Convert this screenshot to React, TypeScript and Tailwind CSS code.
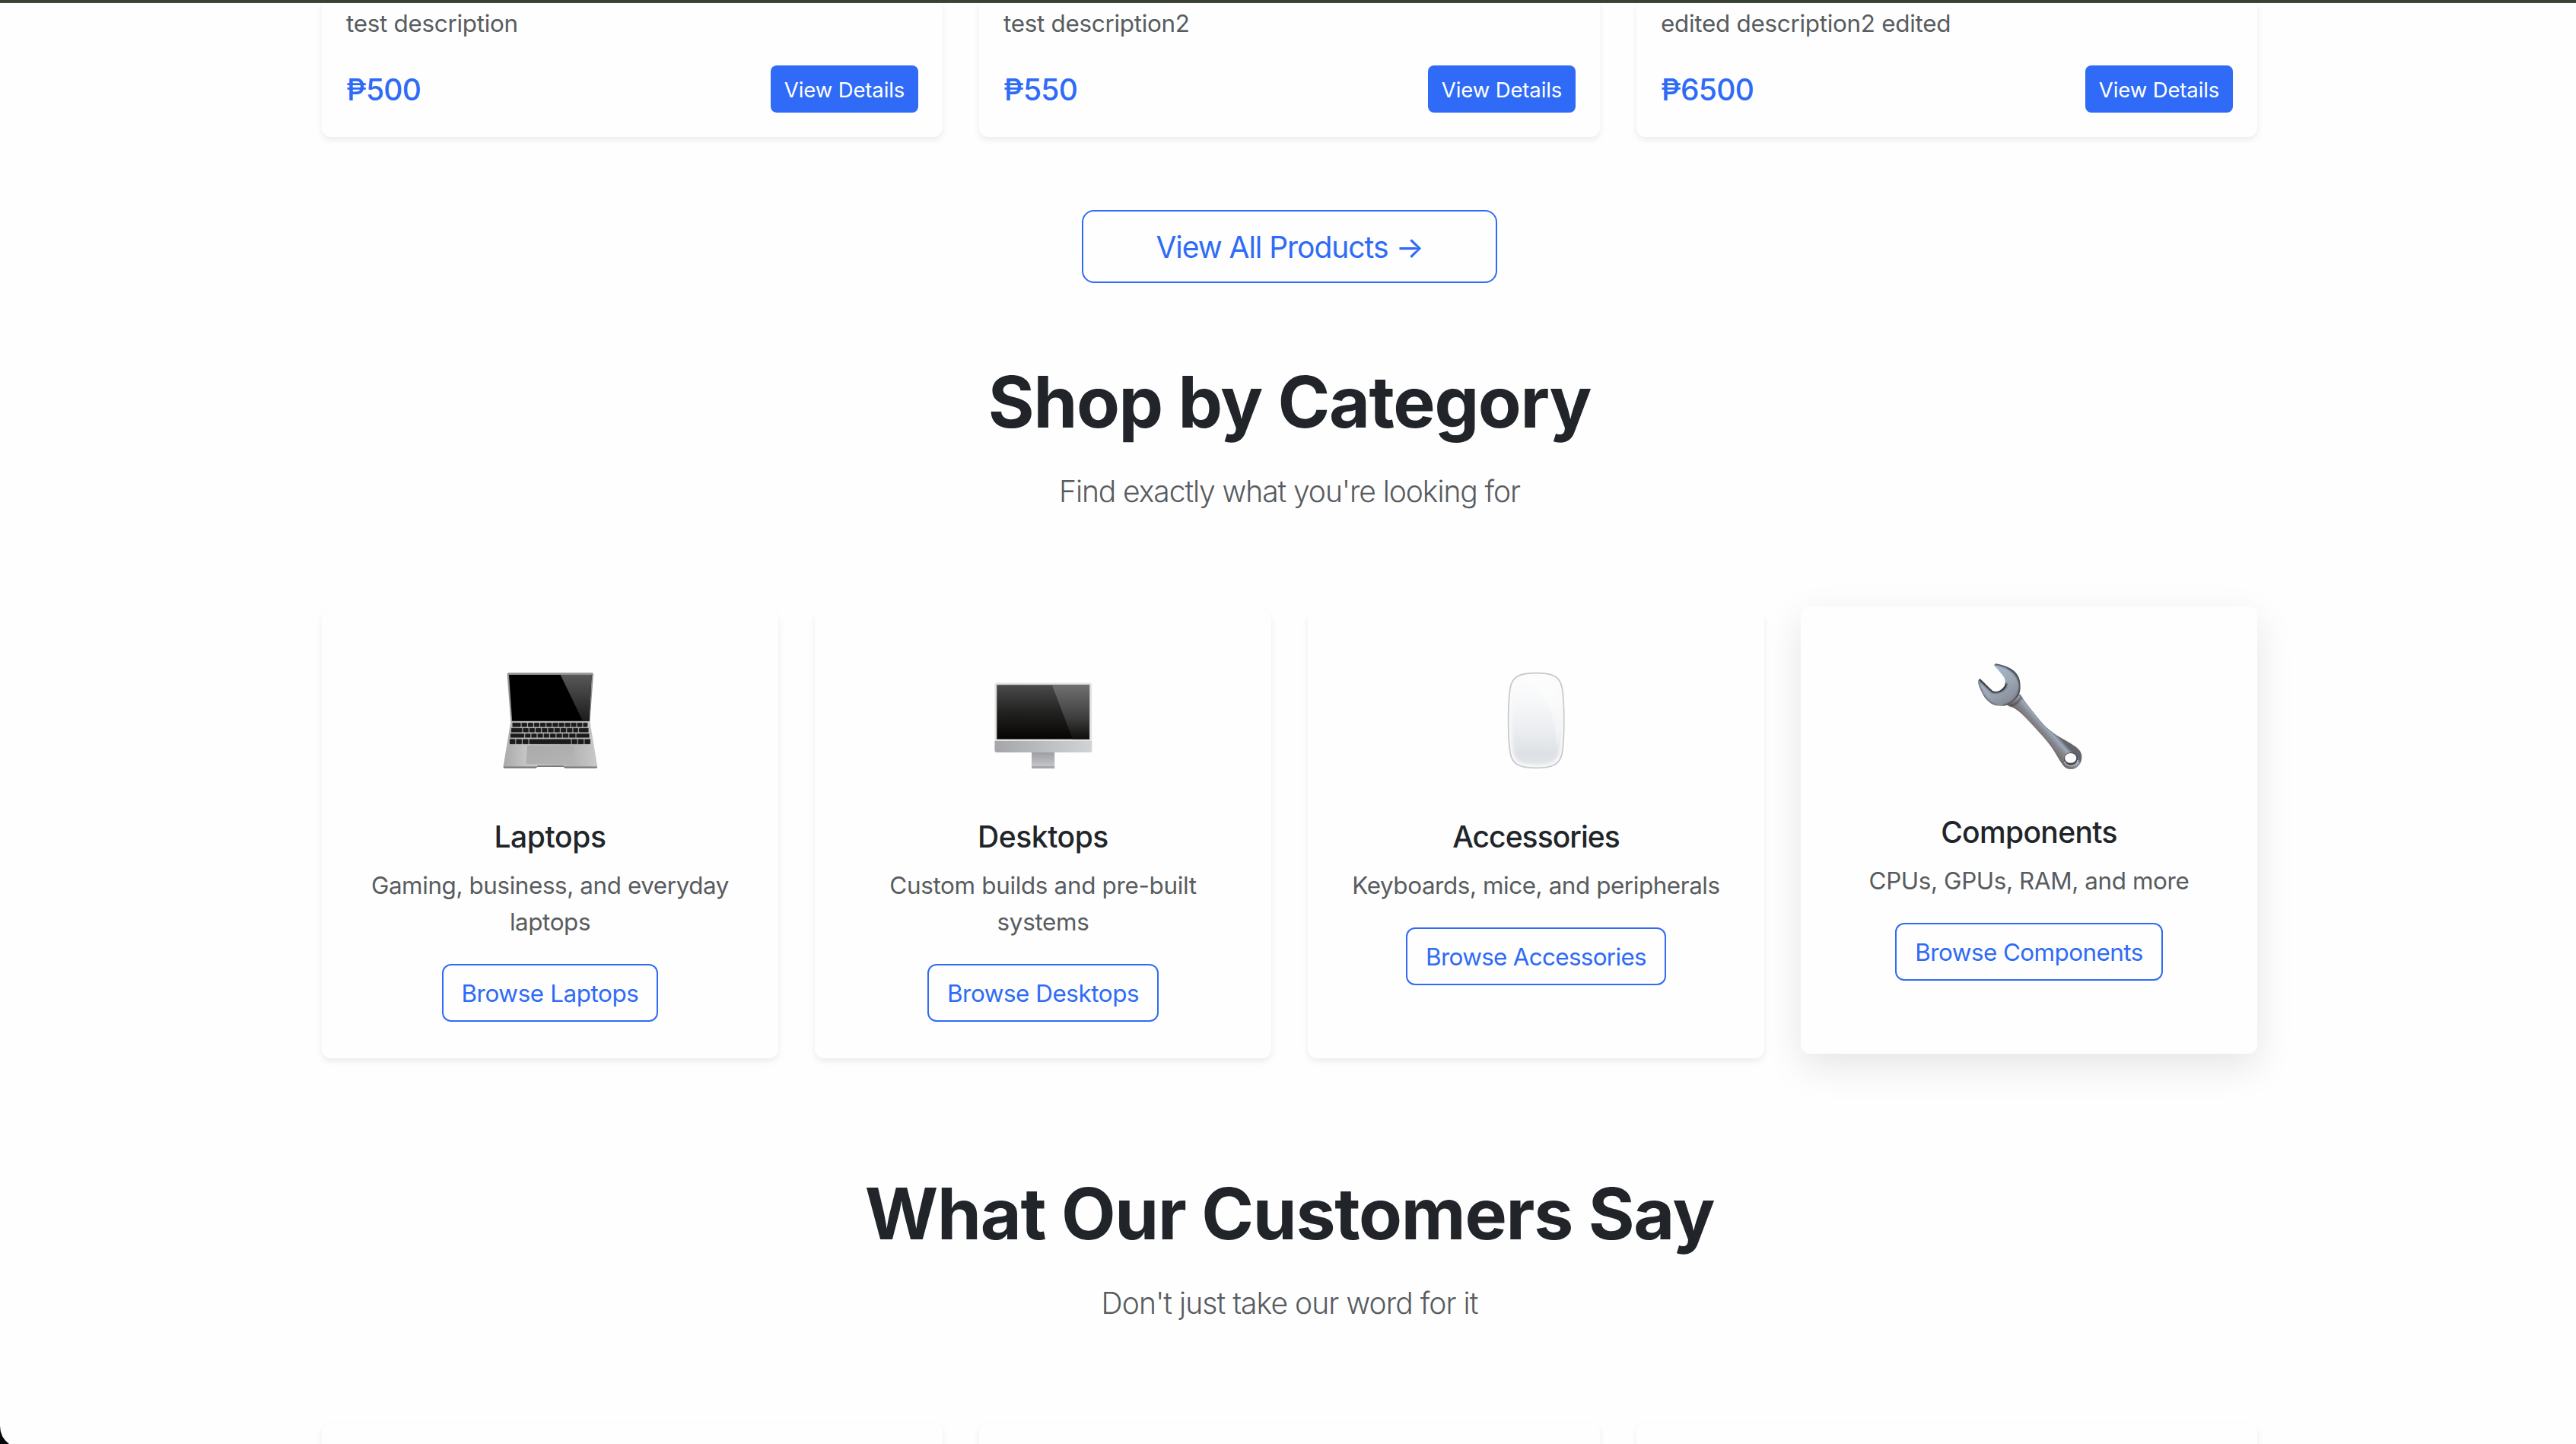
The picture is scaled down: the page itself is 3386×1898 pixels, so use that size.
import type { ReactNode } from "react";

const products = [
  { description: "test description", price: "₱500" },
  { description: "test description2", price: "₱550" },
  { description: "edited description2 edited", price: "₱6500" },
];

function LaptopIcon() {
  const rows = [
    { y: 73, h: 5.4, keys: [20.6, 32.6, 41, 49, 57, 65.2, 73.4, 81.6, 89.6, 97.6, 105.6, 113.4], end: 120.4 },
    { y: 80, h: 5.4, keys: [19, 34.4, 42.8, 51, 59.2, 67.4, 75.8, 84, 92.2, 100.4, 108], end: 121.6 },
    { y: 87.2, h: 5.4, keys: [18, 37.2, 45.4, 53.6, 61.8, 70, 78.4, 86.8, 95.2, 104.6], end: 122.6 },
    { y: 94.4, h: 6.6, keys: [17, 25.4, 34, 42.6, 98.6, 106.8, 115.4], end: 124 },
  ];
  return (
    <svg viewBox="0 0 140 140" className="size-[140px]">
      <defs>
        <linearGradient id="lapBase" x1="0" y1="0" x2="1" y2="0">
          <stop offset="0" stopColor="#a9a9a9" />
          <stop offset="0.25" stopColor="#c6c6c6" />
          <stop offset="0.75" stopColor="#b5b5b5" />
          <stop offset="1" stopColor="#c9c9c9" />
        </linearGradient>
        <linearGradient id="lapGlare" x1="0" y1="0" x2="0" y2="1">
          <stop offset="0" stopColor="#585858" />
          <stop offset="1" stopColor="#1c1c1c" />
        </linearGradient>
        <linearGradient id="lapPad" x1="0" y1="0" x2="1" y2="1">
          <stop offset="0" stopColor="#aaaaaa" />
          <stop offset="1" stopColor="#b4b4b4" />
        </linearGradient>
      </defs>
      <path d="M15.5 7.2H125a2 2 0 0 1 2 2L122.4 72H18.4L13.6 9.2a2 2 0 0 1 1.9-2Z" fill="#8f9491" />
      <path d="M16 10H124.7L121.4 70.8H20.2Z" fill="#000" />
      <path d="M83.7 10H124.7L121.4 70.8H113Z" fill="url(#lapGlare)" />
      <path d="M18.4 71H122.4L132.2 130.5a1.6 1.6 0 0 1-1.6 2.2H90l-2-1.8H53l-2 1.8H10.2a1.6 1.6 0 0 1-1.6-2.2Z" fill="url(#lapBase)" />
      <path d="M8.6 130.6H52.6L54 129.2H86.6L88.2 130.6H132.2L131 132.8H89.6L87.6 131H53.4L51.4 132.8H9.8Z" fill="#7b7b7b" />
      {rows.map((row) =>
        row.keys.map((x, i) => (
          <rect key={`${row.y}-${x}`} x={x} y={row.y} width={(row.keys[i + 1] ?? row.end) - x - 1.1} height={row.h} rx={0.6} fill="#1b1b1b" stroke="#555" strokeWidth={0.4} />
        )),
      )}
      <path d="M40.1 102.8H100.7L101.5 127.2H38.5Z" fill="url(#lapPad)" />
    </svg>
  );
}

function DesktopIcon() {
  return (
    <svg viewBox="0 0 140 140" className="size-[140px]">
      <defs>
        <linearGradient id="deskScreen" x1="0" y1="0" x2="0" y2="1">
          <stop offset="0" stopColor="#4a4a4a" />
          <stop offset="0.5" stopColor="#222221" />
          <stop offset="1" stopColor="#060402" />
        </linearGradient>
        <linearGradient id="deskGlare" x1="0" y1="0" x2="0" y2="1">
          <stop offset="0" stopColor="#707070" />
          <stop offset="0.6" stopColor="#3e3e3e" />
          <stop offset="1" stopColor="#100f0d" />
        </linearGradient>
        <linearGradient id="deskChin" x1="0" y1="0" x2="1" y2="0">
          <stop offset="0" stopColor="#a5a6aa" />
          <stop offset="1" stopColor="#d2d3d5" />
        </linearGradient>
        <linearGradient id="deskStand" x1="0" y1="0" x2="0" y2="1">
          <stop offset="0" stopColor="#9b9ca0" />
          <stop offset="1" stopColor="#cacbcd" />
        </linearGradient>
      </defs>
      <rect x="55" y="111" width="30.2" height="21.6" fill="url(#deskStand)" />
      <rect x="55" y="130.2" width="30.2" height="1" fill="#a2a2a4" />
      <rect x="55" y="131.8" width="30.2" height="1" fill="#7e7e80" />
      <rect x="6.5" y="20.6" width="127.7" height="91.4" rx="2.5" fill="#e3e4e5" />
      <path d="M6.5 97H134.2V109.6a2.4 2.4 0 0 1-2.4 2.4H8.9a2.4 2.4 0 0 1-2.4-2.4Z" fill="url(#deskChin)" />
      <rect x="8.8" y="22.8" width="122.6" height="72.2" fill="#9a9a9a" />
      <rect x="9.5" y="23.4" width="121.2" height="71" fill="url(#deskScreen)" />
      <path d="M81.9 23.4H130.7V94.4H108.9Z" fill="url(#deskGlare)" />
    </svg>
  );
}

function MouseIcon() {
  const body =
    "M70.2 7.6C92 7.6 101.5 12 104.3 27C107.6 48 107.6 92 104.3 113C101.5 128 92 132.4 70.2 132.4C48.4 132.4 38.9 128 36.1 113C32.8 92 32.8 48 36.1 27C38.9 12 48.4 7.6 70.2 7.6Z";
  return (
    <svg viewBox="0 0 140 140" className="size-[140px]">
      <defs>
        <linearGradient id="mouseFill" x1="0" y1="0" x2="0" y2="1">
          <stop offset="0" stopColor="#fdfdfd" />
          <stop offset="0.3" stopColor="#f7f8f9" />
          <stop offset="0.65" stopColor="#e9ebee" />
          <stop offset="0.85" stopColor="#dde1e5" />
          <stop offset="1" stopColor="#e2e6e9" />
        </linearGradient>
        <filter id="mouseSoft" x="-20%" y="-20%" width="140%" height="140%">
          <feGaussianBlur stdDeviation="2.5" />
        </filter>
        <clipPath id="mouseClip">
          <path d={body} />
        </clipPath>
      </defs>
      <path d={body} fill="url(#mouseFill)" />
      <g clipPath="url(#mouseClip)">
        <path d={body} fill="none" stroke="#fbfbfb" strokeWidth="8" filter="url(#mouseSoft)" />
        <path d="M58 21C82 30 97 66 97 105C103 90 103 40 97 22C88 12 70 14 58 21Z" fill="#fff" opacity="0.35" />
      </g>
      <path d={body} fill="none" stroke="#c8c8c8" strokeWidth="1.7" />
    </svg>
  );
}

function WrenchIcon() {
  const handle =
    "M58 41.5C63 50 68 56 73 62.3C79 70 84 76 89.7 82.3C95 87.5 100 91.5 106.3 95.7C115 101 123 105 129.7 109.7C136 114 139 118 139 124C139 133 133 139.7 125 139.7C120 139.7 117 137.5 114.7 134.3C109 126.5 105 118 99.7 110.7C94 103 89 97 83 90.7C76 83 68 74 59.7 66.3C54 61 48 57.5 41 55.5Z";
  const head =
    "M23.7 3.3L26.3 1.3C33 2.5 39 4 44.7 7C50 10 53 13 54.7 16C58 21 58.5 26 58.5 32C58.5 38 57.5 42 54 46C50 51 44 54.5 40 56C35 57.2 32 57 28 56.5C22 55.5 18 52.5 14.7 49C11 45.5 9.5 42 8 39C5.5 34 3 29 3 24L5.3 20.7C11 26 16.5 32 22.3 37.3C26 38.5 30 38 33 35.7C36.5 33 38.5 31 38.7 27C38.8 23.5 38.5 21.5 37 19C33 13 28 8.5 23.7 3.3Z";
  return (
    <svg viewBox="0 0 140 140" className="size-[140px]">
      <defs>
        <linearGradient id="wrHandle" gradientUnits="userSpaceOnUse" x1="98" y1="84" x2="80" y2="100">
          <stop offset="0" stopColor="#62656c" />
          <stop offset="0.2" stopColor="#9daabd" />
          <stop offset="0.45" stopColor="#86888f" />
          <stop offset="0.85" stopColor="#71676b" />
          <stop offset="1" stopColor="#4e4042" />
        </linearGradient>
        <linearGradient id="wrHead" gradientUnits="userSpaceOnUse" x1="20" y1="10" x2="48" y2="54">
          <stop offset="0" stopColor="#a6b8cd" />
          <stop offset="0.5" stopColor="#9ba6b3" />
          <stop offset="1" stopColor="#838893" />
        </linearGradient>
        <filter id="wrSoft" x="-20%" y="-20%" width="140%" height="140%">
          <feGaussianBlur stdDeviation="0.9" />
        </filter>
        <clipPath id="wrClip">
          <path d={head} />
        </clipPath>
      </defs>
      <path d={handle} fill="url(#wrHandle)" stroke="#5b5356" strokeWidth="0.6" />
      <path d="M44 57C54 55 57 50 60 45" fill="none" stroke="#352f33" strokeWidth="2.5" opacity="0.6" filter="url(#wrSoft)" />
      <path d={head} fill="url(#wrHead)" />
      <g clipPath="url(#wrClip)">
        <path d="M24 1C44 4 57 14 58.6 30C58.5 44 50 54 36 57.5" fill="none" stroke="#33353a" strokeWidth="2.6" filter="url(#wrSoft)" />
        <path d="M4 21L22.3 38C31 39 39.5 35 39.5 27" fill="none" stroke="#1f2226" strokeWidth="3" filter="url(#wrSoft)" />
        <path d="M28 57C16 53 7 42 3 25" fill="none" stroke="#5f5960" strokeWidth="2" filter="url(#wrSoft)" />
      </g>
      <ellipse cx="125" cy="126.5" rx="9.2" ry="8.6" fill="#4c4d50" />
      <path d="M116.5 130C118 135 124 137 129 135C132 133.5 134 131 134 128" fill="none" stroke="#a7b4c2" strokeWidth="1.6" />
      <ellipse cx="124.7" cy="125.4" rx="7.6" ry="6.4" fill="#fefefe" />
    </svg>
  );
}

type Category = {
  icon: ReactNode;
  title: string;
  titleSpacing: string;
  text: string;
  textSpacing: string;
  button: string;
  buttonClass: string;
  active?: boolean;
};

const categories: Category[] = [
  {
    icon: <LaptopIcon />,
    title: "Laptops",
    titleSpacing: "tracking-[-0.4px]",
    text: "Gaming, business, and everyday laptops",
    textSpacing: "tracking-[-0.4px]",
    button: "Browse Laptops",
    buttonClass: "w-[284px] tracking-[-0.4px]",
  },
  {
    icon: <DesktopIcon />,
    title: "Desktops",
    titleSpacing: "tracking-[-0.45px]",
    text: "Custom builds and pre-built systems",
    textSpacing: "tracking-[-0.32px]",
    button: "Browse Desktops",
    buttonClass: "w-[304px] tracking-[-0.45px]",
  },
  {
    icon: <MouseIcon />,
    title: "Accessories",
    titleSpacing: "tracking-[-0.95px]",
    text: "Keyboards, mice, and peripherals",
    textSpacing: "tracking-[-0.42px]",
    button: "Browse Accessories",
    buttonClass: "w-[342px] tracking-[-0.68px]",
  },
  {
    icon: <WrenchIcon />,
    title: "Components",
    titleSpacing: "tracking-[-0.65px]",
    text: "CPUs, GPUs, RAM, and more",
    textSpacing: "tracking-[-0.38px]",
    button: "Browse Components",
    buttonClass: "w-[352px] tracking-[-0.55px]",
    active: true,
  },
];

function CategoryCard({ item }: { item: Category }) {
  const state = item.active
    ? "-translate-y-[6px] shadow-[0_16px_50px_rgba(0,0,0,0.1)]"
    : "shadow-[0_4px_8px_rgba(0,0,0,0.075)]";
  return (
    <div className={`flex h-[588px] flex-col items-center rounded-xl bg-[#fefefe] p-12 text-center ${state}`}>
      <div className="mb-[33px] flex h-48 shrink-0 items-start pt-[26px]">{item.icon}</div>
      <h5 className={`mb-4 text-[39px] leading-[48px] font-medium ${item.titleSpacing}`}>{item.title}</h5>
      <p className={`mb-[31px] w-[504px] text-[31.4px] leading-[48px] text-[#585c5f] ${item.textSpacing}`}>{item.text}</p>
      <button
        className={`flex h-[76px] shrink-0 items-center justify-center rounded-xl border-2 border-[#2f6bf6] pt-px text-[31.4px] leading-[48px] whitespace-nowrap text-[#2f6bf6] ${item.buttonClass}`}
      >
        {item.button}
      </button>
    </div>
  );
}

export default function App() {
  return (
    <div className="relative h-[1898px] w-[3386px] overflow-hidden bg-[#fefefe] font-['Inter',sans-serif] text-[#212529]">
      <div className="h-1 border-b-2 border-[#42483e] bg-[#37412f]" />
      <main className="ml-[423px] flex w-[2544px] flex-col">
        <section className="grid grid-cols-3 gap-12">
          {products.map((p) => (
            <div key={p.price} className="h-44 rounded-b-xl bg-[#fefefe] px-8 pt-[3px] shadow-[0_4px_8px_rgba(0,0,0,0.075)]">
              <p className="mb-[31px] text-[31.4px] leading-[48px] tracking-[-0.28px] text-[#585c5f]">{p.description}</p>
              <div className="flex h-[62px] items-center justify-between">
                <span className="pt-px text-[39px] leading-[48px] font-medium tracking-[-0.7px] text-[#2f6bf6]">{p.price}</span>
                <button className="h-[62px] w-[194px] rounded-lg bg-[#2f6bf6] pt-px text-[27.5px] leading-[42px] tracking-[-0.12px] text-white">
                  View Details
                </button>
              </div>
            </div>
          ))}
        </section>

        <button className="mt-24 flex h-24 w-[546px] items-center justify-center self-center rounded-2xl border-2 border-[#2f6bf6] pt-px text-[39px] leading-[60px] tracking-[-1.03px] text-[#2f6bf6]">
          View All Products →
        </button>

        <h2 className="mt-[98px] text-center text-[93px] leading-[116px] font-bold tracking-[-1.35px]">Shop by Category</h2>
        <p className="mt-[30px] text-center text-[39px] leading-[60px] font-[340] tracking-[-1.08px] text-[#585c5f]">
          Find exactly what you're looking for
        </p>

        <section className="mt-[127px] grid grid-cols-4 gap-12">
          {categories.map((c) => (
            <CategoryCard key={c.title} item={c} />
          ))}
        </section>

        <h2 className="mt-[146px] text-center text-[93px] leading-[116px] font-bold tracking-[-1.28px]">What Our Customers Say</h2>
        <p className="mt-[30px] text-center text-[39px] leading-[60px] font-[340] tracking-[-0.94px] text-[#585c5f]">
          Don't just take our word for it
        </p>

        <section className="mt-[127px] grid grid-cols-3 gap-12">
          {products.map((p) => (
            <div key={p.price} className="h-[400px] rounded-xl bg-[#fefefe] shadow-[0_4px_8px_rgba(0,0,0,0.075)]" />
          ))}
        </section>
      </main>
      <svg viewBox="0 0 12 24" className="absolute bottom-0 left-0 h-6 w-3">
        <path d="M0 0A30 30 0 0 0 12 24H0Z" fill="#05080d" />
      </svg>
    </div>
  );
}
